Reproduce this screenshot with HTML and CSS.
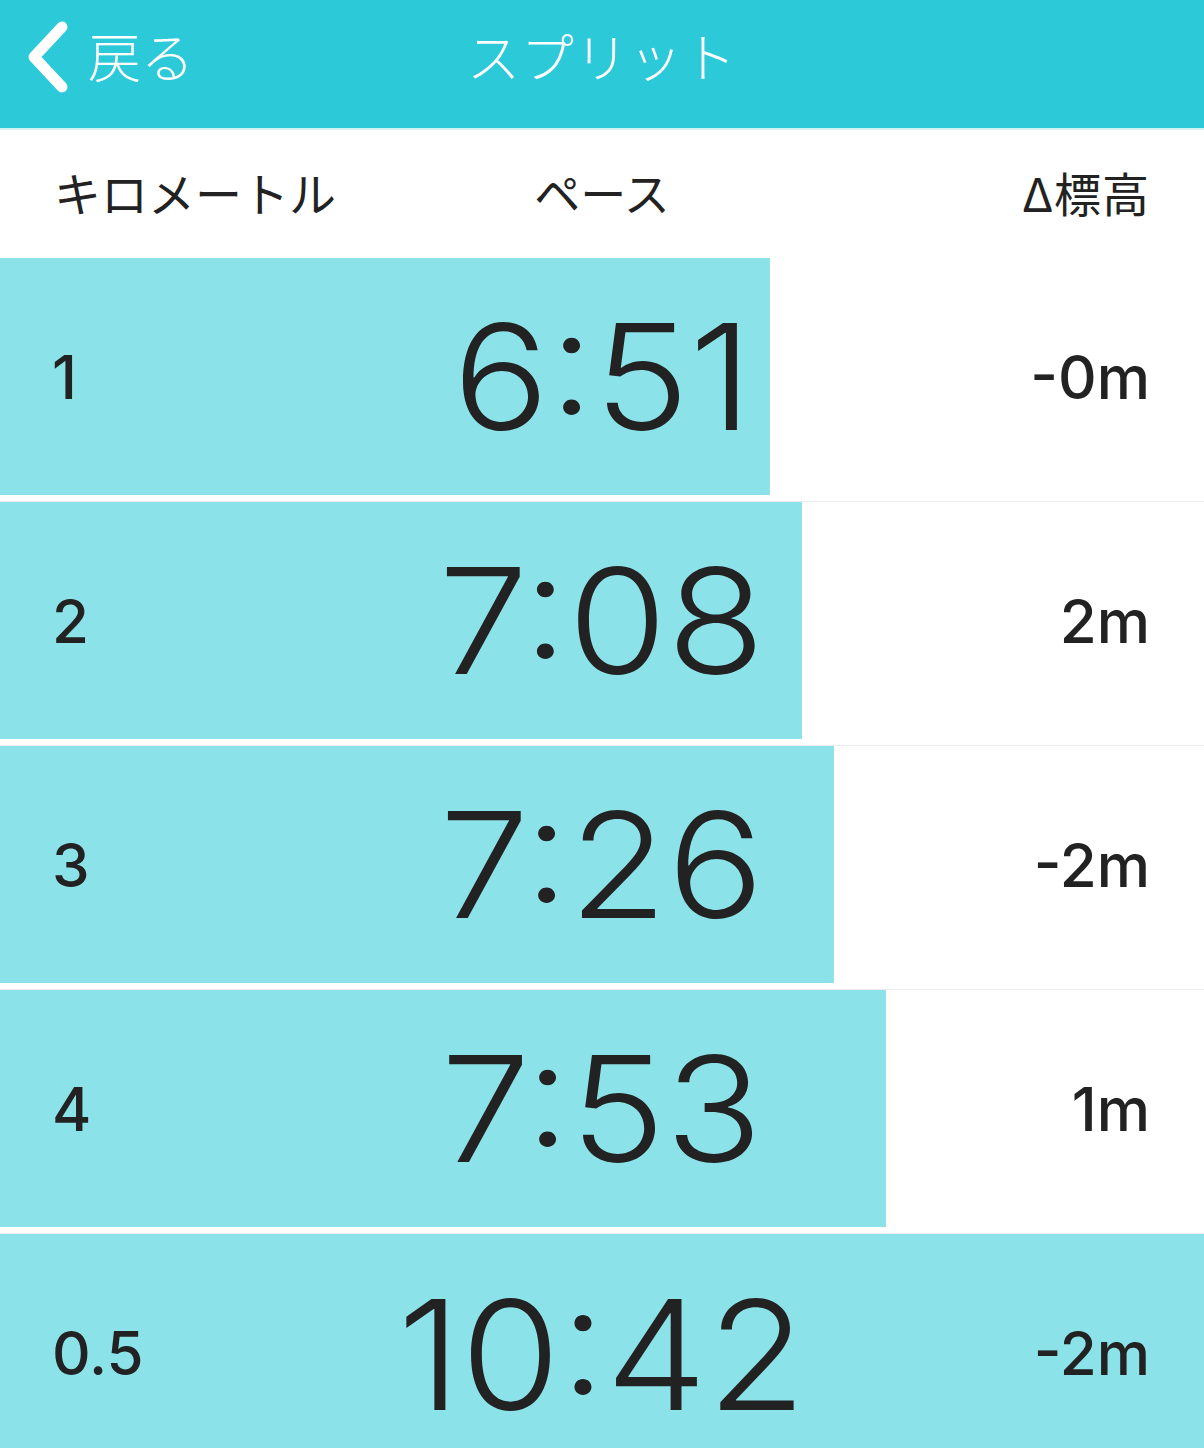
FILE: index.html
```html
<!DOCTYPE html>
<html lang="ja">
<head>
<meta charset="utf-8">
<title>スプリット</title>
<link rel="stylesheet" href="styles.css">
</head>
<body>
<header class="nav">
  <div class="back">
    <svg class="chev" width="48" height="72" viewBox="0 0 48 72"><polyline points="38,6 10,36 38,66" fill="none" stroke="#fff" stroke-width="11" stroke-linecap="round" stroke-linejoin="round"/></svg>
    <span class="back-text">戻る</span>
  </div>
  <div class="title">スプリット</div>
  <div class="spacer"></div>
</header>
<div class="cols">
  <div class="c-km">キロメートル</div>
  <div class="c-pace">ペース</div>
  <div class="c-elev">Δ標高</div>
</div>
<div class="list">
  <div class="row" style="--w:770px"><div class="bar"><div class="km">1</div><div class="pace">6:51</div><div class="elev">-0m</div></div></div>
  <div class="row" style="--w:802px"><div class="bar"><div class="km">2</div><div class="pace">7:08</div><div class="elev">2m</div></div></div>
  <div class="row" style="--w:834px"><div class="bar"><div class="km">3</div><div class="pace">7:26</div><div class="elev">-2m</div></div></div>
  <div class="row" style="--w:886px"><div class="bar"><div class="km">4</div><div class="pace">7:53</div><div class="elev">1m</div></div></div>
  <div class="row" style="--w:1204px"><div class="bar"><div class="km">0.5</div><div class="pace big">10:42</div><div class="elev">-2m</div></div></div>
</div>
</body>
</html>
```
FILE: styles.css
```css
html, body {
  margin: 0;
  padding: 0;
  background: #fff;
}
body {
  width: 1204px;
  height: 1448px;
  overflow: hidden;
  font-family: "Noto Sans CJK JP", "Noto Sans", sans-serif;
  color: #222;
}
.nav {
  height: 128px;
  background: #2cc9d8;
  border-bottom: 2px solid #d2f3f6;
  display: grid;
  grid-template-columns: 1fr auto 1fr;
  align-items: center;
  color: #fff;
}
.back {
  display: flex;
  align-items: center;
  padding-left: 24px;
  gap: 16px;
  margin-top: -14px;
}
.chev {
  display: block;
}
.back-text {
  font-size: 53px;
  font-weight: 300;
  line-height: 1;
  margin-top: -4px;
}
.title {
  font-size: 53px;
  font-weight: 300;
  line-height: 1;
  letter-spacing: 1px;
  margin-top: -18px;
}
.cols {
  height: 128px;
  display: grid;
  grid-template-columns: 1fr auto 1fr;
  align-items: center;
  font-size: 47px;
  font-weight: 400;
  line-height: 1;
  padding: 0 54px 6px 54px;
  box-sizing: border-box;
}
.c-km { justify-self: start; }
.c-pace { justify-self: center; font-size: 46px; }
.c-elev { justify-self: end; letter-spacing: 1px; }
.row {
  height: 244px;
  box-sizing: border-box;
  padding-bottom: 7px;
  border-bottom: 1px solid #ececec;
}
.row:last-child { border-bottom: 0; }
.bar {
  height: 237px;
  background: linear-gradient(90deg, #8be3e9 var(--w), transparent var(--w));
  display: grid;
  grid-template-columns: 1fr auto 1fr;
  align-items: center;
  padding: 0 54px 0 52px;
  font-family: "Inter", "Noto Sans", sans-serif;
}
.km {
  justify-self: start;
  font-size: 60px;
  font-weight: 500;
}
.pace {
  justify-self: center;
  font-size: 147px;
  font-weight: 360;
  line-height: 1;
  margin-left: 2px;
  transform: scaleX(1.09);
}
.pace.big {
  font-size: 152px;
  margin-top: 4px;
  transform: scaleX(1.06);
}
.elev {
  justify-self: end;
  font-size: 60px;
  font-weight: 500;
}
```
